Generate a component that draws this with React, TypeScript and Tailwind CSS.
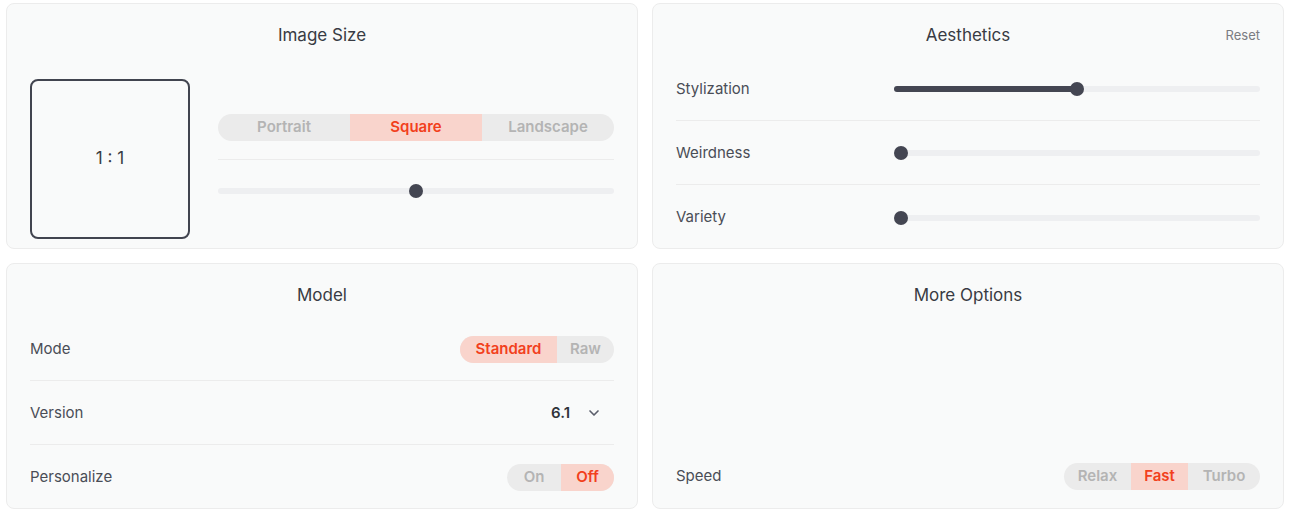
import { ChevronDown } from "lucide-react"

const font = { fontFamily: "Inter, 'Liberation Sans', sans-serif" }

function Panel({ title, action, children }: { title: string; action?: string; children: React.ReactNode }) {
  return (
    <div className="h-[246px] rounded-lg border border-[#ececec] bg-[#f9fafa] px-[23px] flex flex-col">
      <div className="relative h-[53px] shrink-0 flex items-center justify-center pt-[11px]">
        <h2 className="text-[17px] text-[#383b43]">{title}</h2>
        {action && (
          <button className="absolute right-0 top-[22px] text-[13px] text-[#7a7c82]">{action}</button>
        )}
      </div>
      {children}
    </div>
  )
}

function Segmented({ options, active, widths }: { options: string[]; active: number; widths: string[] }) {
  return (
    <div className="flex h-[27px] rounded-full overflow-hidden bg-[#ebebeb]">
      {options.map((o, i) => (
        <div
          key={o}
          className={
            "flex items-center justify-center text-[15px] font-semibold " +
            widths[i] +
            (i === active ? " bg-[#f9d4cc] text-[#f2401c]" : " text-[#b4b4b4]")
          }
        >
          {o}
        </div>
      ))}
    </div>
  )
}

function Slider({ value, filled }: { value: number; filled?: boolean }) {
  return (
    <div className="relative h-[14px] flex items-center">
      <div className="h-[6px] w-full rounded-full bg-[#eeeff1]" />
      {filled && (
        <div
          className="absolute left-0 h-[6px] rounded-full bg-[#444652]"
          style={{ width: `calc(${value}% - ${value * 0.14 - 7}px)` }}
        />
      )}
      <div
        className="absolute h-[14px] w-[14px] rounded-full bg-[#444652]"
        style={{ left: `calc(${value}% - ${value * 0.14}px)` }}
      />
    </div>
  )
}

function Row({ label, children, last }: { label: string; children: React.ReactNode; last?: boolean }) {
  return (
    <div className={"h-16 shrink-0 flex items-center justify-between pt-px" + (last ? "" : " border-b border-[#ececec]")}>
      <span className="text-[15px] text-[#4a4d56]">{label}</span>
      {children}
    </div>
  )
}

function SliderRow({ label, value, filled, last }: { label: string; value: number; filled?: boolean; last?: boolean }) {
  return (
    <div className={"h-16 shrink-0 flex items-center pt-px" + (last ? "" : " border-b border-[#ececec]")}>
      <span className="w-[218px] shrink-0 text-[15px] text-[#4a4d56]">{label}</span>
      <div className="flex-1">
        <Slider value={value} filled={filled} />
      </div>
    </div>
  )
}

export default function App() {
  return (
    <div className="min-h-screen bg-white pl-[6px] pr-[14px] pt-[3px]" style={font}>
      <div className="grid grid-cols-2 gap-[14px]">
        <Panel title="Image Size">
          <div className="flex gap-7 pt-[22px]">
            <div className="w-[160px] h-[160px] shrink-0 rounded-lg border-2 border-[#41444f] flex items-center justify-center text-[17px] text-[#383b43]">
              1 : 1
            </div>
            <div className="flex-1 pt-[35px]">
              <Segmented
                options={["Portrait", "Square", "Landscape"]}
                active={1}
                widths={["flex-1", "flex-1", "flex-1"]}
              />
              <div className="mt-[18px] border-t border-[#ececec]" />
              <div className="mt-[24px]">
                <Slider value={50} />
              </div>
            </div>
          </div>
        </Panel>

        <Panel title="Aesthetics" action="Reset">
          <SliderRow label="Stylization" value={50} filled />
          <SliderRow label="Weirdness" value={0} />
          <SliderRow label="Variety" value={0} last />
        </Panel>

        <Panel title="Model">
          <Row label="Mode">
            <Segmented options={["Standard", "Raw"]} active={0} widths={["w-[97px]", "w-[57px]"]} />
          </Row>
          <Row label="Version">
            <div className="flex items-center gap-[16px] pr-[12px]">
              <span className="text-[15px] font-semibold text-[#30333a]">6.1</span>
              <ChevronDown className="w-4 h-4 text-[#5b5e6b]" strokeWidth={2.5} />
            </div>
          </Row>
          <Row label="Personalize" last>
            <Segmented options={["On", "Off"]} active={1} widths={["w-[54px]", "w-[53px]"]} />
          </Row>
        </Panel>

        <Panel title="More Options">
          <div className="flex-1" />
          <Row label="Speed" last>
            <Segmented
              options={["Relax", "Fast", "Turbo"]}
              active={1}
              widths={["w-[67px]", "w-[57px]", "w-[72px]"]}
            />
          </Row>
        </Panel>
      </div>
    </div>
  )
}
